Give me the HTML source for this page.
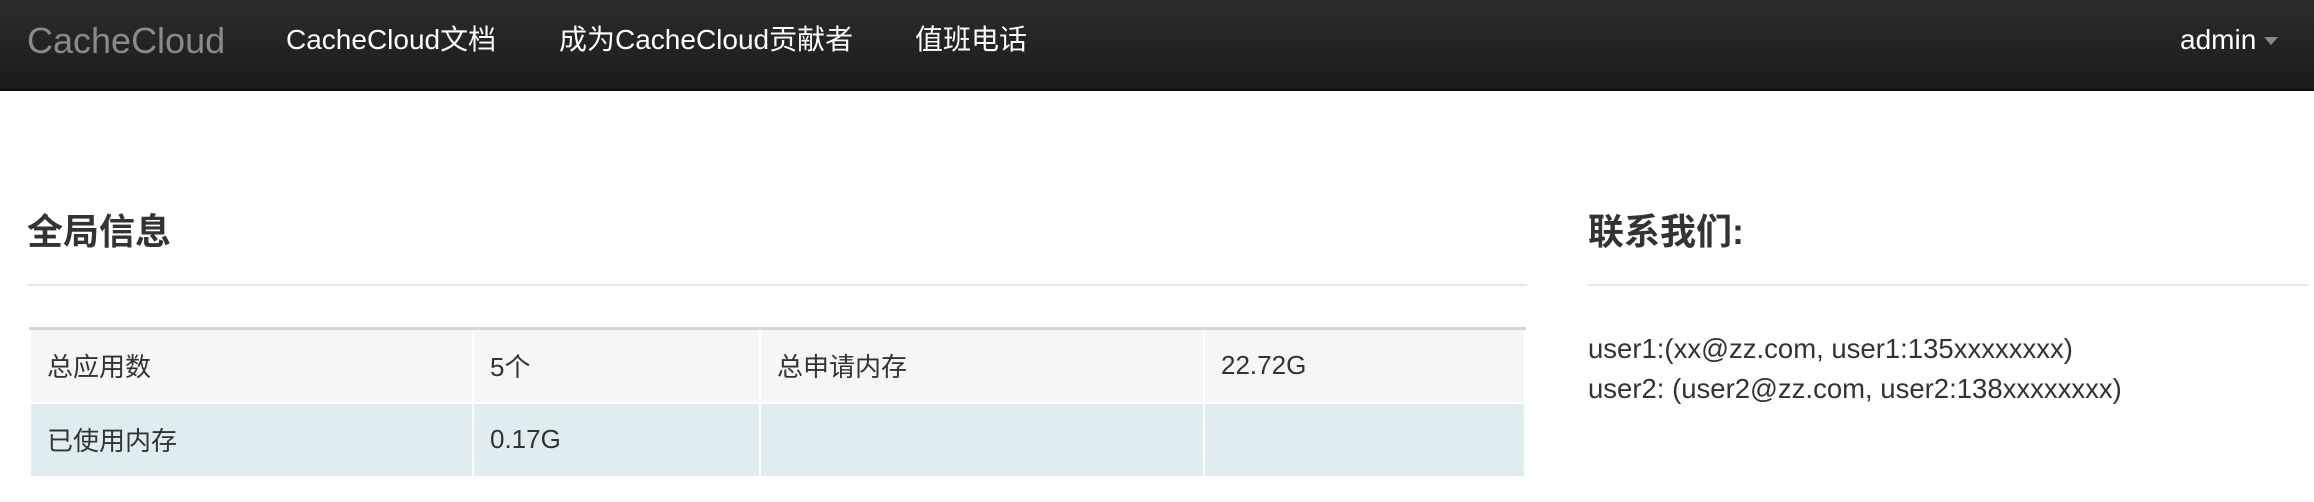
<!DOCTYPE html>
<html><head><meta charset="utf-8"><style>
*{margin:0;padding:0;box-sizing:border-box}
body{width:2314px;height:502px;background:#fff;font-family:"Liberation Sans","Noto Sans CJK SC",sans-serif;color:#333;position:relative;overflow:hidden}
.nav{position:absolute;left:0;top:0;width:2314px;height:91px;background:linear-gradient(#2c2c2c,#1b1b1b);border-bottom:2px solid #0a0a0a}
.nav span{position:absolute;top:22px;font-size:28px;color:#fff;line-height:36px}
.brand{left:27px;color:#8a8a8a!important;font-size:36px!important;top:26px!important;line-height:30px!important}
.caret{position:absolute;left:2264px;top:37px;width:0;height:0;border-left:7px solid transparent;border-right:7px solid transparent;border-top:8px solid #888}
h2{position:absolute;font-size:36px;font-weight:bold;color:#333;line-height:40px;top:212px}
.hr{position:absolute;top:284px;height:2px;background:#e6e6e6}
table{position:absolute;left:29px;top:327px;width:1497px;border-collapse:collapse;border-top:3px solid #d6d6d6;font-size:26px}
td{height:74px;padding-left:16px;border:2px solid #fff;border-top:none}
tr.a td{background:#f6f6f6}
tr.b td{background:#dfedf0}
.contact{position:absolute;left:1588px;top:329px;font-size:27.5px;line-height:40px;color:#333}
</style></head><body>
<div class="nav">
<span class="brand">CacheCloud</span>
<span style="left:286px">CacheCloud文档</span>
<span style="left:559px">成为CacheCloud贡献者</span>
<span style="left:915px">值班电话</span>
<span style="left:2180px">admin</span>
<div class="caret"></div>
</div>
<h2 style="left:27px">全局信息</h2>
<div class="hr" style="left:27px;width:1500px"></div>
<h2 style="left:1588px">联系我们:</h2>
<div class="hr" style="left:1588px;width:720px"></div>
<table>
<tr class="a"><td style="width:443px">总应用数</td><td style="width:287px">5个</td><td style="width:444px">总申请内存</td><td>22.72G</td></tr>
<tr class="b"><td>已使用内存</td><td>0.17G</td><td></td><td></td></tr>
</table>
<div class="contact">user1:(xx@zz.com, user1:135xxxxxxxx)<br>user2: (user2@zz.com, user2:138xxxxxxxx)</div>
</body></html>
